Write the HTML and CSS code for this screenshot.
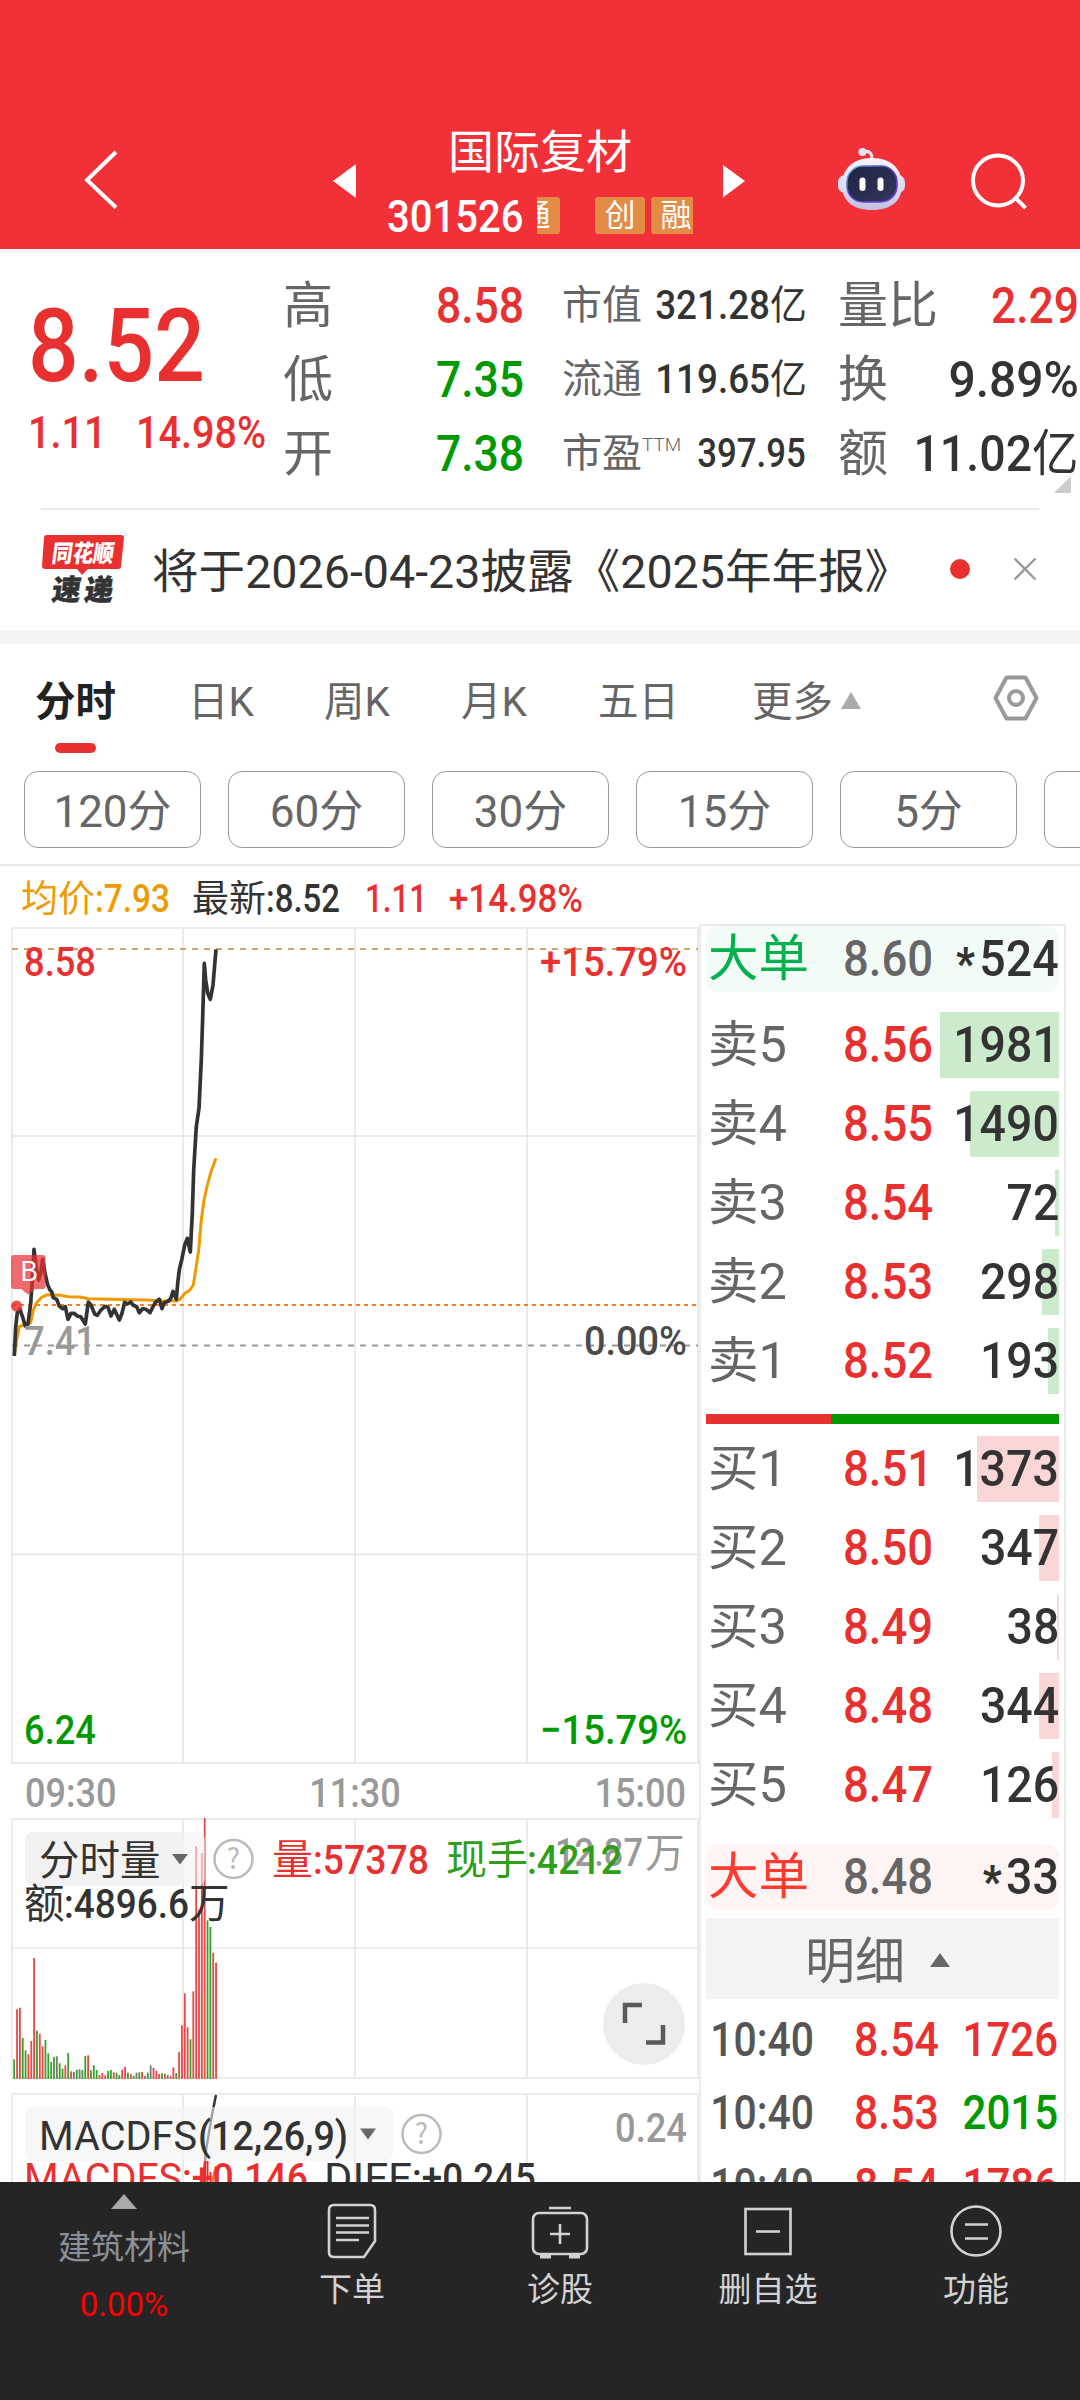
FILE: index.html
```html
<!DOCTYPE html>
<html lang="zh-CN">
<head>
<meta charset="utf-8">
<title>国际复材 301526</title>
<link rel="stylesheet" href="styles.css">
</head>
<body>
<div class="app">
  <header class="header">
    <svg class="back" width="320" height="129" viewBox="0 120 320 129"><path d="M116 152 L87 180 L116 207.500" fill="none" stroke="#fff" stroke-width="4"/></svg>
    <svg width="50" height="129" viewBox="320 120 50 129"><path d="M356 164V198L333 181Z" fill="#fff"/></svg>
    <div class="title">
      <div class="name">国际复材</div>
      <div class="code-row">
        <span class="code"><span class="num">301526</span></span>
        <div class="tags"><span class="tag tag-first">通</span><span class="tag">创</span><span class="tag">融</span></div>
      </div>
    </div>
    <svg width="90" height="129" viewBox="710 120 90 129"><path d="M723 165V197.500L745 181Z" fill="#fff"/></svg>
    <svg width="160" height="129" viewBox="800 120 160 129">
      <defs>
        <linearGradient id="shell" x1="0" y1="0" x2="0" y2="1"><stop offset="0" stop-color="#f6f5fd"/><stop offset=".6" stop-color="#dcdbf3"/><stop offset="1" stop-color="#c3bfe0"/></linearGradient>
        <linearGradient id="face" x1="0" y1="0" x2="1" y2="1"><stop offset="0" stop-color="#1c2442"/><stop offset="1" stop-color="#34375e"/></linearGradient>
        <linearGradient id="rim" x1="0" y1="0" x2="1" y2="1"><stop offset="0" stop-color="#6ab4cf"/><stop offset=".45" stop-color="#5a3cc0"/><stop offset="1" stop-color="#6b48e8"/></linearGradient>
      </defs>
      <path d="M863 152c6-2 9 1 9 7" fill="none" stroke="#e7e6f6" stroke-width="3"/>
      <circle cx="862.500" cy="152" r="4" fill="#e0e6f6"/>
      <rect x="838" y="175" width="67" height="18" rx="7" fill="#dedcf5"/>
      <path d="M872 158c19 0 30 11 30 27 0 17-12 25-30 25s-30-8-30-25c0-16 11-27 30-27z" fill="url(#shell)"/>
      <rect x="847" y="166" width="50" height="36" rx="16" fill="url(#face)" stroke="url(#rim)" stroke-width="1.500"/>
      <rect x="859.500" y="177.500" width="6" height="13.500" rx="3" fill="#fff"/><rect x="877.500" y="177.500" width="6" height="13.500" rx="3" fill="#fff"/>
    </svg>
    <svg width="120" height="129" viewBox="960 120 120 129"><g fill="none" stroke="#fff" stroke-width="4"><circle cx="998" cy="180.500" r="25"/><path d="M1014.500 197L1025.500 208"/></g></svg>
  </header>

  <section class="quote">
    <div class="price-col">
      <div class="price"><span class="num">8.52</span></div>
      <div class="change"><span class="num">1.11</span><span class="num">14.98%</span></div>
    </div>
    <div class="stats big">
      <div><span>高</span><b class="up num">8.58</b></div>
      <div><span>低</span><b class="down num">7.35</b></div>
      <div><span>开</span><b class="down num">7.38</b></div>
    </div>
    <div class="stats small">
      <div><span>市值</span><b class="num">321.28<i>亿</i></b></div>
      <div><span>流通</span><b class="num">119.65<i>亿</i></b></div>
      <div><span>市盈<sup>TTM</sup></span><b class="num plain">397.95</b></div>
    </div>
    <div class="stats big last">
      <div><span>量比</span><b class="up num">2.29</b></div>
      <div><span>换</span><b class="num percent">9.89%</b></div>
      <div><span>额</span><b class="num amount">11.02<i>亿</i></b></div>
    </div>
    <span class="corner"></span>
  </section>

  <section class="news">
    <svg width="84" height="70" viewBox="41 534 84 70">
      <path d="M47 535H121q3 0 3 3L121 566q0 3-3 3H88L82 575L77 569H45q-3 0-3-3L44 538q0-3 3-3Z" fill="#e93030"/>
      <g class="logo-text"><text transform="translate(51 561.500) skewX(-8)" textLength="62" fill="#fff" font-size="24" lengthAdjust="spacingAndGlyphs">同花顺</text>
      <text transform="translate(51 600) skewX(-8)" textLength="61" fill="#333" stroke="#333" stroke-width=".6" font-size="28.500" lengthAdjust="spacing">速递</text></g>
    </svg>
    <span class="news-text">将于2026-04-23披露《2025年年报》</span>
    <span class="dot"></span>
    <svg width="24" height="24" viewBox="0 0 24 24"><path d="M1.500 1.500L22.500 22.500M22.500 1.500L1.500 22.500" stroke="#999" stroke-width="2.400"/></svg>
  </section>

  <nav class="tabs">
    <span class="tab active">分时</span><span class="tab">日K</span><span class="tab">周K</span><span class="tab">月K</span><span class="tab">五日</span><span class="tab more">更多<i class="tri"></i></span>
    <svg width="46" height="46" viewBox="0 0 46 46" fill="none" stroke="#999" stroke-width="4"><path d="M13.500 2.500H32.500L43.500 23L32.500 43.500H13.500L2.500 23Z" stroke-linejoin="round"/><circle cx="23" cy="23" r="7"/></svg>
  </nav>
  <div class="periods"><span>120分</span><span>60分</span><span>30分</span><span>15分</span><span>5分</span><span></span></div>

  <main class="board">
    <div class="charts">
      <svg class="legend" width="699" height="59" viewBox="0 866 699 59">
        <g fill="#ee9b00"><text class="c" x="21" y="912" font-size="37">均价</text><text class="n" x="95" y="912" font-size="38" textLength="75" lengthAdjust="spacingAndGlyphs">:7.93</text></g>
        <g fill="#333"><text class="c" x="192" y="912" font-size="37">最新</text><text class="n" x="266" y="912" font-size="38" textLength="74" lengthAdjust="spacingAndGlyphs">:8.52</text></g>
        <g fill="#e93030"><text class="n" x="365" y="912" font-size="38" textLength="62" lengthAdjust="spacingAndGlyphs">1.11</text><text class="n" x="449" y="912" font-size="38" textLength="134" lengthAdjust="spacingAndGlyphs">+14.98%</text></g>
      </svg>
      <svg width="699" height="840" viewBox="0 925 699 840">
        <g fill="none" stroke="#ebebeb" stroke-width="2"><path d="M12 928H698V1763H12ZM183 928V1763M355 928V1763M527 928V1763"/><path d="M12 1136H698M12 1554.500H698" stroke="#e3e3e3" stroke-width="1.500"/></g>
        <path d="M12 949H698" stroke="#cda46d" stroke-width="2" stroke-dasharray="6 6"/>
        <path d="M12 1305H698" stroke="#fb7c1c" stroke-width="2" stroke-dasharray="4 4"/>
        <path d="M12 1345.500H698" stroke="#999" stroke-width="2" stroke-dasharray="6 6"/>
        <g class="n" font-size="41">
          <text x="24" y="976" fill="#e93030" textLength="72" lengthAdjust="spacingAndGlyphs">8.58</text>
          <text x="540" y="976" fill="#e93030" textLength="147" lengthAdjust="spacingAndGlyphs">+15.79%</text>
          <text x="584" y="1355" fill="#4a4a4a" textLength="103" lengthAdjust="spacingAndGlyphs">0.00%</text>
          <text x="24" y="1744" fill="#090" textLength="72" lengthAdjust="spacingAndGlyphs">6.24</text>
          <text x="540" y="1744" fill="#090" textLength="147" lengthAdjust="spacingAndGlyphs">−15.79%</text>
        </g>
        <path id="avg" fill="none" stroke="#ee9b00" stroke-width="3" stroke-linejoin="round"/>
        <path id="price" fill="none" stroke="#333" stroke-width="3.700" stroke-linejoin="round"/>
        <text class="n" x="24" y="1355" font-size="41" fill="#999" textLength="72" lengthAdjust="spacingAndGlyphs">7.41</text>
        <path d="M14 1255H43q2.500 0 2.500 2.500V1286q0 3-3 3H35L28 1294.500L21 1289H14q-3 0-3-3V1258q0-3 3-3Z" fill="#e93030" opacity=".72"/>
        <circle cx="16.500" cy="1306" r="5.500" fill="#e93030" opacity=".85"/>
        <text class="c" x="20" y="1281" font-size="27" fill="#fff">B</text>
      </svg>
      <div class="times"><span class="num">09:30</span><span class="num">11:30</span><span class="num">15:00</span></div>
      <svg width="699" height="262" viewBox="0 1818 699 262">
        <g fill="none" stroke="#ebebeb" stroke-width="2"><path d="M12 1819H698V2078H12ZM183 1819V2078M355 1819V2078M527 1819V2078"/><path d="M12 1948H698" stroke="#ddd" stroke-width="1.200"/></g>
        <g id="volume"></g>
        <rect x="25" y="1832" width="180" height="54" rx="8" fill="#f2f2f2" opacity=".6"/>
        <rect x="25" y="1832" width="158" height="54" rx="8" fill="#f2f2f2"/>
        <text class="c" x="39" y="1875" font-size="40.500" fill="#333">分时量</text>
        <path d="M172 1854H188L180 1864.500Z" fill="#666"/>
        <circle cx="233.500" cy="1859" r="19" fill="none" stroke="#bbb" stroke-width="2.500"/><text class="c" x="233.500" y="1869" font-size="28" text-anchor="middle" fill="#bbb">?</text>
        <g fill="#999"><text class="n" x="555" y="1866" font-size="39" textLength="88" lengthAdjust="spacingAndGlyphs">12.87</text><text class="c" x="645" y="1867" font-size="39.500">万</text></g>
        <g fill="#e93030"><text class="c" x="272" y="1874" font-size="41">量</text><text class="n" x="313" y="1874" font-size="40" textLength="116" lengthAdjust="spacingAndGlyphs">:57378</text></g>
        <g fill="#2f9e18"><text class="c" x="446" y="1874" font-size="41">现手</text><text class="n" x="527" y="1874" font-size="40" textLength="95" lengthAdjust="spacingAndGlyphs">:4212</text></g>
        <g fill="#333"><text class="c" x="24" y="1918" font-size="40.500">额</text><text class="n" x="64" y="1918" font-size="40" textLength="125" lengthAdjust="spacingAndGlyphs">:4896.6</text><text class="c" x="189" y="1918" font-size="40.500">万</text></g>
        <circle cx="644" cy="2024" r="41" fill="#ededed"/>
        <path d="M642 2005H625V2023M646 2042.500H663V2025" fill="none" stroke="#5a5a5a" stroke-width="4.500"/>
      </svg>
      <svg class="macd" width="699" height="89" viewBox="0 2093 699 89">
        <path d="M12 2182V2094H698V2182M183 2094V2182M355 2094V2182M527 2094V2182" fill="none" stroke="#ebebeb" stroke-width="2"/>
        <path d="M216 2095L212 2115L206 2150L203.500 2182" fill="none" stroke="#333" stroke-width="2.500"/>
        <rect x="25" y="2107" width="368" height="54" rx="8" fill="#f2f2f2" opacity=".6"/>
        <path d="M205 2182V2161M207.500 2182V2161M210.500 2182V2172" stroke="#e93030" stroke-width="2"/><path d="M212 2182L216 2166" stroke="#fb6a2c" stroke-width="2.500"/>
        <g fill="#333"><text class="l" x="39" y="2150" font-size="41" textLength="158" lengthAdjust="spacingAndGlyphs">MACDFS</text><text class="n" x="198" y="2150" font-size="41" textLength="150" lengthAdjust="spacingAndGlyphs">(12,26,9)</text></g>
        <path d="M360 2128.500H376L368 2139.500Z" fill="#666"/>
        <circle cx="421.500" cy="2134" r="19" fill="none" stroke="#bbb" stroke-width="2.500"/><text class="c" x="421.500" y="2144" font-size="28" text-anchor="middle" fill="#bbb">?</text>
        <text class="n" x="615" y="2142" font-size="40" fill="#999" textLength="72" lengthAdjust="spacingAndGlyphs">0.24</text>
        <g fill="#e93030"><text class="l" x="24" y="2192" font-size="41" textLength="158" lengthAdjust="spacingAndGlyphs">MACDFS</text><text class="n" x="182" y="2192" font-size="40" textLength="126" lengthAdjust="spacingAndGlyphs">:+0.146</text></g>
        <g fill="#333"><text class="l" x="324" y="2192" font-size="41" textLength="88" lengthAdjust="spacingAndGlyphs">DIFF</text><text class="n" x="412" y="2192" font-size="40" textLength="124" lengthAdjust="spacingAndGlyphs">:+0.245</text></g>
      </svg>
    </div>

    <aside class="book">
      <div class="large sell"><span>大单</span><b class="num">8.60</b><em class="num"><u>*</u>524</em></div>
      <div class="levels ask">
        <div class="level"><i style="width:119px"></i><span>卖5</span><b class="num">8.56</b><em class="num">1981</em></div>
        <div class="level"><i style="width:89px"></i><span>卖4</span><b class="num">8.55</b><em class="num">1490</em></div>
        <div class="level"><i style="width:4px"></i><span>卖3</span><b class="num">8.54</b><em class="num">72</em></div>
        <div class="level"><i style="width:17px"></i><span>卖2</span><b class="num">8.53</b><em class="num">298</em></div>
        <div class="level"><i style="width:11px"></i><span>卖1</span><b class="num">8.52</b><em class="num">193</em></div>
      </div>
      <div class="ratio"></div>
      <div class="levels bid">
        <div class="level"><i style="width:82px"></i><span>买1</span><b class="num">8.51</b><em class="num">1373</em></div>
        <div class="level"><i style="width:20px"></i><span>买2</span><b class="num">8.50</b><em class="num">347</em></div>
        <div class="level"><i style="width:2px"></i><span>买3</span><b class="num">8.49</b><em class="num">38</em></div>
        <div class="level"><i style="width:20px"></i><span>买4</span><b class="num">8.48</b><em class="num">344</em></div>
        <div class="level"><i style="width:7px"></i><span>买5</span><b class="num">8.47</b><em class="num">126</em></div>
      </div>
      <div class="large buy"><span>大单</span><b class="num">8.48</b><em class="num"><u>*</u>33</em></div>
      <div class="detail">明细<i class="tri"></i></div>
      <div class="trade"><span class="num">10:40</span><b class="num">8.54</b><em class="num up">1726</em></div>
      <div class="trade"><span class="num">10:40</span><b class="num">8.53</b><em class="num down">2015</em></div>
      <div class="trade"><span class="num">10:40</span><b class="num">8.54</b><em class="num up">1786</em></div>
    </aside>
  </main>

  <footer class="bottom">
    <div class="sector"><i class="tri"></i><span>建筑材料</span><b>0.00%</b></div>
    <div class="item"><svg width="64" height="60" viewBox="-32 -30 64 60"><path d="M-18-26H18q5 0 5 5V10L12 26H-18q-5 0-5-5V-21q0-5 5-5Z"/><path d="M-16-13H17M-16-5.500H17M-16 1.500H17M-16 9H7"/></svg><span>下单</span></div>
    <div class="item"><svg width="64" height="60" viewBox="-32 -30 64 60"><rect x="-27" y="-18" width="54" height="41" rx="6"/><path d="M-11-23H11M0-7V13M-10 3H10"/><path d="M-20 25.500H-9M9 25.500H20" stroke-width="4"/></svg><span>诊股</span></div>
    <div class="item"><svg width="64" height="60" viewBox="-32 -30 64 60"><rect x="-22.500" y="-22" width="45" height="45"/><path d="M-12 .500H12"/></svg><span>删自选</span></div>
    <div class="item"><svg width="64" height="60" viewBox="-32 -30 64 60"><circle cx="0" cy="0" r="24.500"/><path d="M-11-6.500H12M-11 7.500H12"/></svg><span>功能</span></div>
  </footer>
</div>
<script src="chart.js"></script>
</body>
</html>
```
FILE: styles.css
```css
* { box-sizing: border-box; }
body { margin: 0; background: #fff; }
.app { width: 1080px; height: 2400px; overflow: hidden; display: flex; flex-direction: column; font-family: Roboto, "Noto Sans CJK SC", sans-serif; color: #333; }
svg { display: block; flex: none; }
b, em, i, u { font-style: normal; font-weight: inherit; text-decoration: none; }
.num { display: inline-block; font-weight: 500; white-space: nowrap; }
.up { color: #e93030; }
.down { color: #090; }
.n { font-family: Roboto, sans-serif; font-weight: 500; }
.c { font-family: "Noto Sans CJK SC", sans-serif; font-weight: 400; }
.l { font-family: Roboto, sans-serif; font-weight: 400; }
.logo-text { font-family: "Noto Sans CJK SC", sans-serif; font-weight: 900; }

.header { height: 249px; flex: none; padding-top: 120px; background: #f23037; color: #fff; display: flex; }
.title { width: 340px; display: flex; flex-direction: column; align-items: center; }
.name { font-size: 46px; line-height: 64px; }
.code-row { width: 306px; height: 63px; display: flex; align-items: center; justify-content: space-between; }
.code { width: 138px; font-size: 45px; line-height: 61px; padding-top: 2px; }
.code .num { transform: scaleX(.89); transform-origin: left; }
.tags { width: 156px; height: 37px; overflow: hidden; display: flex; gap: 6px; }
.tag { flex: none; width: 50px; height: 37px; border-radius: 3px; background: #e28c46; font-size: 31px; line-height: 37px; text-align: center; }
.tag-first { margin-left: -27px; margin-right: 29px; }

.quote { height: 259px; flex: none; display: flex; padding-top: 20px; position: relative; }
.price-col { width: 283px; padding-left: 28px; color: #e93030; white-space: nowrap; }
.price { font-size: 102px; line-height: 114px; padding-top: 20px; }
.price .num { transform: scaleX(.875); transform-origin: left; }
.change { display: flex; font-size: 45px; line-height: 60px; }
.change .num { width: 108px; transform: scaleX(.88); transform-origin: left; }
.stats { width: 241px; display: flex; flex-direction: column; }
.stats div { display: flex; justify-content: space-between; height: 74px; line-height: 74px; align-items: center; color: #333; }
.stats span { color: #666; white-space: nowrap; }
.stats b { transform: scaleX(.89); transform-origin: right; }
.stats i { display: inline-block; font-weight: 400; }
.big { font-size: 50px; }
.small { width: 240px; margin: 0 36px 0 38px; font-size: 40px; }
.small b { transform: scaleX(.92); }
.small .plain { transform: scaleX(.87); }
.small sup { font-size: 19px; font-weight: 300; line-height: 0; vertical-align: 16px; }
.last .percent { transform: scaleX(.96); }
.last .amount { transform: scaleX(.93); }
.corner { position: absolute; left: 1054px; top: 227px; border-left: 17px solid transparent; border-bottom: 17px solid #ccc; }

.news { height: 136px; flex: none; display: flex; align-items: center; border-bottom: 14px solid #f4f4f4; padding: 0 43px 0 41px; background: linear-gradient(#ebebeb, #ebebeb) 41px 0 / 998px 2px no-repeat; }
.news-text { width: 798px; margin-left: 27px; padding-top: 6px; font-size: 46.600px; line-height: 64px; white-space: nowrap; }
.dot { width: 20px; height: 20px; border-radius: 50%; background: #e93030; margin-left: 2px; margin-right: 43px; }

.tabs { height: 127px; flex: none; display: flex; padding: 27px 41px 0 35px; font-size: 40.500px; line-height: 62px; color: #666; }
.tab { width: 136px; height: 84px; white-space: nowrap; }
.tab:nth-child(1) { width: 153px; }
.tab:nth-child(4), .tab:nth-child(3) { width: 137px; }
.tab:nth-child(5) { width: 154px; }
.active { color: #222; font-weight: 700; }
.active::after { content: ""; display: block; width: 41px; height: 10px; margin: 10px 0 0 20px; border-radius: 5px; background: #e93030; }
.tri { display: inline-block; border: 10px solid transparent; border-top: 0; border-bottom: 17px solid #aaa; }
.more { width: 240px; }
.more .tri { margin-left: 8px; vertical-align: 7px; }
.tabs svg { margin: 4px 0 0 auto; }
.periods { height: 95px; flex: none; display: flex; gap: 27px; padding-left: 24px; border-bottom: 2px solid #e8e8e8; overflow: hidden; }
.periods span { flex: none; width: 177px; height: 77px; border: 1.500px solid #999; border-radius: 14px; color: #666; font-size: 44px; line-height: 80px; text-align: center; }

.board { height: 1316px; flex: none; overflow: hidden; display: flex; }
.charts { width: 699px; height: 1316px; overflow: hidden; }
.times { height: 53px; display: flex; justify-content: space-between; padding: 0 13px 0 25px; font-size: 41px; line-height: 56px; color: #999; }
.times .num { transform: scaleX(.88); transform-origin: left; }
.times .num:nth-child(2) { transform-origin: center; }
.times .num:nth-child(3) { transform-origin: right; }
.macd { margin-top: 13px; }

.book { width: 367px; margin-top: 58px; height: 1280px; border: 2px solid #ebebeb; padding: 0 5px; }
.large, .level { height: 66px; line-height: 66px; display: flex; font-size: 50.500px; position: relative; }
.large { border-radius: 12px; padding-left: 2px; }
.sell { background: #f2fbf6; }
.buy { background: #fff4f4; margin-top: 26px; }
.large span, .level span { width: 135px; white-space: nowrap; }
.level span { color: #666; }
.large b { color: #666; }
.sell span { color: #00b14d; }
.buy span { color: #fe3b30; }
.large b, .level b { width: 76px; transform: scaleX(.9); transform-origin: left; }
.large em, .level em { margin-left: auto; transform: scaleX(.92); transform-origin: right; z-index: 1; }
.large u { font-size: 44px; font-weight: 900; margin-right: 5px; vertical-align: -3px; }
.levels { display: flex; flex-direction: column; gap: 13px; padding-top: 20px; }
.level { padding-left: 2px; }
.level i { position: absolute; right: 0; top: 0; height: 66px; }
.ask i { background: #cceacc; }
.bid i { background: #fbd6d6; }
.bid { padding-top: 12px; }
.level b { color: #e93030; }
.ratio { height: 10px; margin-top: 20px; background: linear-gradient(90deg, #e93030 125px, #090 125px); }
.detail { height: 81px; margin-top: 8px; padding-left: 40px; background: #f4f4f4; color: #666; font-size: 50px; line-height: 88px; text-align: center; }
.detail .tri { border-bottom: 14px solid #666; margin: 0 50px 0 25px; vertical-align: 12px; }
.trade { height: 73px; line-height: 82px; display: flex; font-size: 47.500px; }
.trade span { width: 148px; color: #555; padding-left: 5px; transform: scaleX(.86); transform-origin: left; }
.trade b { color: #e93030; transform: scaleX(.9); transform-origin: left; }
.trade em { margin-left: auto; padding-right: 1px; transform: scaleX(.885); transform-origin: right; }

.bottom { height: 218px; flex: none; background: #252525; color: #d2d2d2; display: flex; }
.sector { width: 248px; display: flex; flex-direction: column; align-items: center; padding-top: 12px; font-size: 33px; color: #8b9099; }
.sector .tri { border-left-width: 13px; border-right-width: 13px; border-bottom-width: 15px; }
.sector span { line-height: 50px; margin-top: 14px; }
.sector b { color: #f00; line-height: 40px; margin-top: 12px; }
.item { width: 208px; display: flex; flex-direction: column; align-items: center; padding-top: 19px; font-size: 33px; line-height: 50px; }
.item svg { fill: none; stroke: #d2d2d2; stroke-width: 2.600; margin-bottom: 4px; }
```
FILE: chart.js
```js
// Points are stored at three times chart scale.
const priceRun = [[43,378],[47,290],[52,248],[60,238],[68,262],[76,288],[84,282],[92,220],[98,130],[102,58],[110,125],[116,150],[122,130],[128,88],[135,130],[143,165],[150,180],[155,185],[160,203],[170,208],[178,228],[188,236],[196,230],[204,268],[213,250],[222,250],[232,258],[242,260],[256,282],[265,216],[273,225],[284,252],[292,256],[303,240],[315,229],[324,232],[333,258],[343,238],[358,270],[366,250],[374,217],[382,222],[392,216],[400,226],[410,230],[418,248],[428,236],[438,238],[450,248],[460,228],[468,215],[478,208],[486,236],[493,218],[504,214],[512,206],[519,184],[529,208],[533,160],[538,120],[546,85],[554,45],[562,25],[571,66],[577,-50],[581,-180],[589,-310],[597,-365],[604,-510],[608,-640],[613,-800],[617,-750],[623,-710],[631,-692],[639,-735],[648,-842]];
const avgRun = [[43,376],[50,330],[58,290],[70,285],[92,278],[100,240],[110,218],[125,202],[143,194],[180,196],[205,200],[240,201],[265,206],[330,208],[440,210],[480,213],[530,213],[540,208],[555,190],[570,180],[580,165],[590,100],[596,60],[604,-30],[612,-90],[621,-130],[633,-175],[648,-215]];
const toPath = run => 'M' + run.map(([x, y]) => (x / 3).toFixed(1) + ' ' + (1230 + y / 3).toFixed(1)).join('L');
document.getElementById('price').setAttribute('d', toPath(priceRun));
document.getElementById('avg').setAttribute('d', toPath(avgRun));

// One bar per minute: colour key and top edge.
const bars = 'g838 r688 r683 g774 g811 r823 r783 r534 g752 r761 r799 g780 g820 g846 g831 k829 g850 g866 r856 g819 r874 k876 g869 k868 g870 g828 r826 g871 g856 g870 r885 r879 r886 g873 g870 r877 g878 g885 r869 r860 g878 r882 g888 k878 g877 r876 k888 g878 k856 r864 r872 r882 g880 r881 k885 r888 r862 g879 r816 r736 r640 r742 g778 r634 r198 r390 r219 r114 g421 g441 r518 r548'.split(' ');
const colors = { r: '#ee4545', g: '#36a02a', k: '#777' };
document.getElementById('volume').innerHTML = bars.map((bar, i) => {
  const top = 1780 + Number(bar.slice(1)) / 3;
  return `<rect x="${(13.3 + i * 2.843).toFixed(2)}" y="${top.toFixed(1)}" width="1.8" height="${(2079 - top).toFixed(1)}" fill="${colors[bar[0]]}"/>`;
}).join('');
```
